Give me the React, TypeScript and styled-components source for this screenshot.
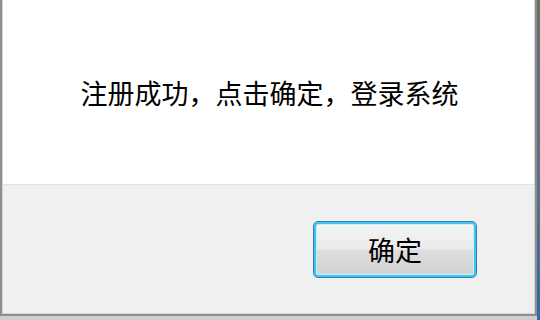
import React from "react";
import styled, { createGlobalStyle } from "styled-components";

const GlobalStyle = createGlobalStyle`
  html, body {
    margin: 0;
    padding: 0;
    background: #dcdcdc;
  }
  body {
    font-family: "Noto Sans CJK SC", "Liberation Sans", sans-serif;
  }
`;

const Screen = styled.div`
  width: 540px;
  height: 320px;
  display: flex;
  background: linear-gradient(180deg, #6d6d6d 0%, #5a6f86 60%, #2f6aa8 100%);
  overflow: hidden;
`;

const Frame = styled.div`
  width: 537px;
  height: 320px;
  display: flex;
  flex-direction: column;
  background: #cfcfcf;
`;

const Window = styled.div`
  flex: 1;
  display: flex;
  flex-direction: column;
  border-left: 2px solid #8e8e8e;
  border-right: 2px solid #8e8e8e;
  border-bottom: 2px solid #8e8e8e;
  box-shadow: inset 1px 0 0 #d4d4d4, inset -1px 0 0 #d4d4d4,
    inset 0 -1px 0 #d4d4d4;
  margin-bottom: 4px;
`;

const Body = styled.div`
  height: 184px;
  display: flex;
  align-items: center;
  justify-content: center;
  background: #ffffff;
  margin: 0 1px;
`;

const Message = styled.p`
  margin: 0;
  font-size: 27px;
  line-height: 1;
  color: #000000;
  padding-left: 2px;
`;

const Footer = styled.div`
  flex: 1;
  display: flex;
  align-items: center;
  justify-content: flex-end;
  padding-right: 57px;
  background: #f0f0f0;
  border-top: 1px solid #e3e3e3;
  margin: 0 1px 1px;
`;

const Button = styled.button`
  width: 164px;
  height: 57px;
  border: 1px solid #2f7fb6;
  border-radius: 5px;
  box-shadow: inset 0 0 0 2px #3fc4f0, inset 0 0 0 3px #c8ecf8;
  background: linear-gradient(
    180deg,
    #f4f4f4 0%,
    #ececec 48%,
    #dddddd 52%,
    #d2d2d2 100%
  );
  font-family: "Noto Sans CJK SC", "Liberation Sans", sans-serif;
  font-size: 27px;
  line-height: 1;
  color: #000000;
  padding: 0;
  cursor: pointer;
`;

export default function App() {
  return (
    <>
      <GlobalStyle />
      <Screen>
        <Frame>
          <Window>
            <Body>
              <Message>注册成功，点击确定，登录系统</Message>
            </Body>
            <Footer>
              <Button>确定</Button>
            </Footer>
          </Window>
        </Frame>
      </Screen>
    </>
  );
}
